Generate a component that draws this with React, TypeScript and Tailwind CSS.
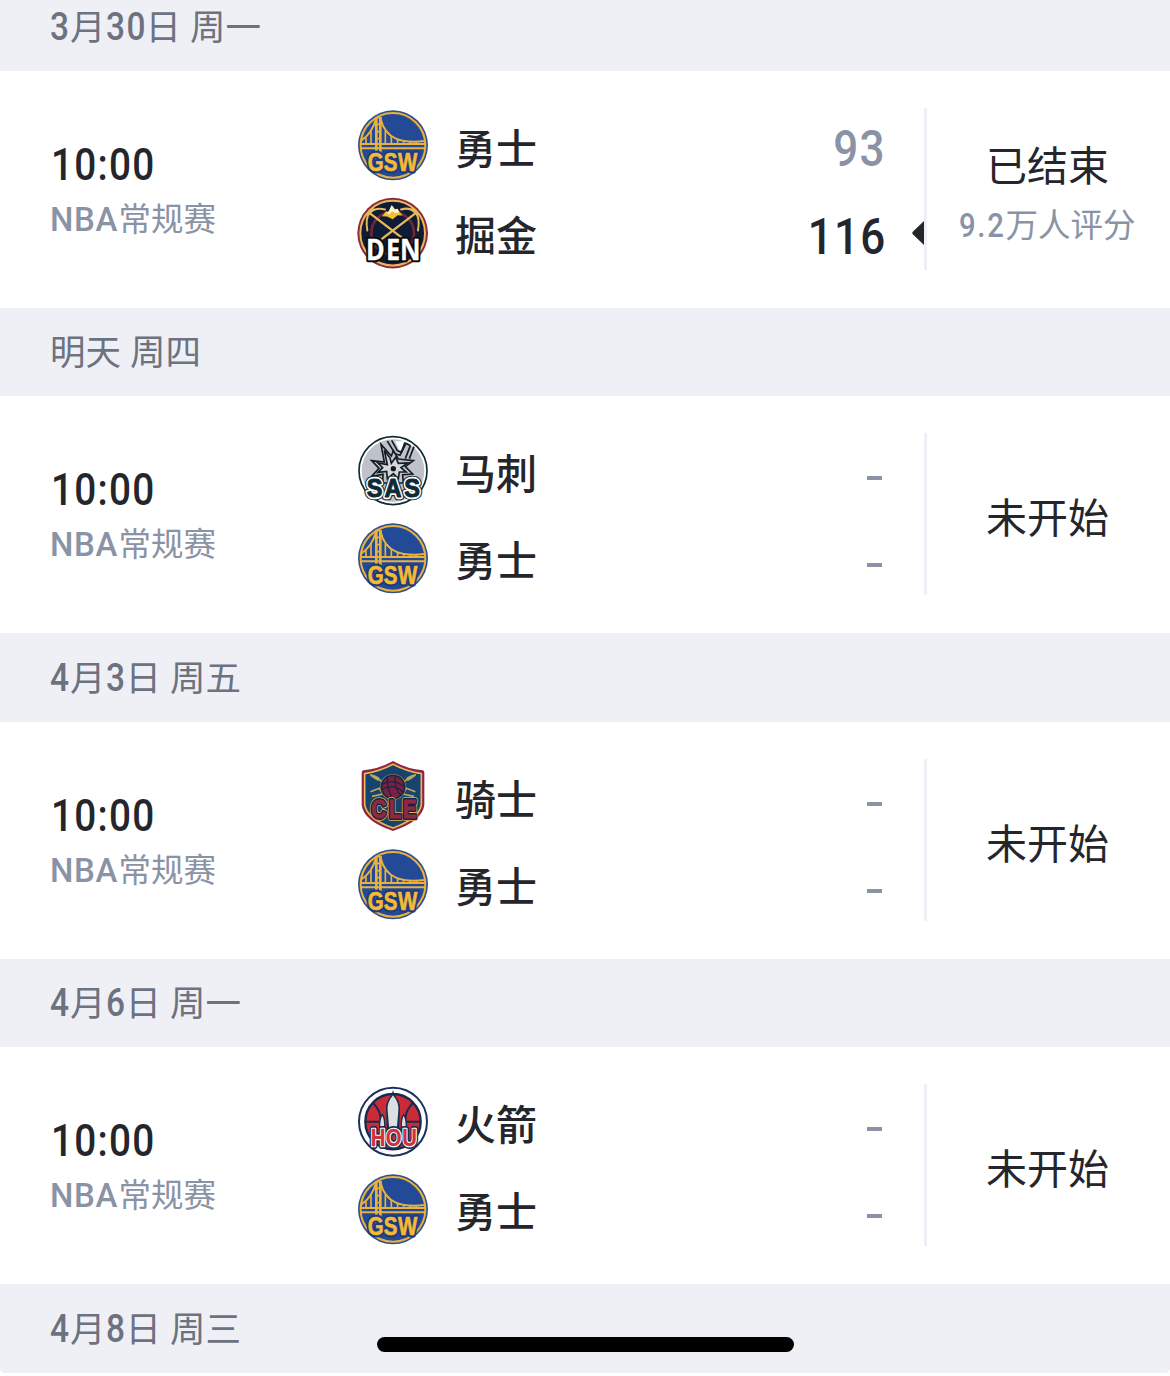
import React from "react";

const CJK = "font-['Noto_Sans_CJK_SC',sans-serif]";
const NUM = "font-['Roboto','Noto_Sans_CJK_SC',sans-serif] font-medium inline-block";
const ARIAL = "Liberation Sans, sans-serif";

type Team = "gsw" | "den" | "sas" | "cle" | "hou";
type Layer = { fill: string; stroke: string; sw: number };

const svgProps = { width: 70, height: 70, className: "block shrink-0 overflow-visible" };

function Letters({ chars, xs, y, size, sx, font, layers }: { chars: string; xs: number[]; y: number; size: number; sx: number; font: string; layers: Layer[] }) {
  return (
    <g fontFamily={font} fontWeight="700" fontSize={size} textAnchor="middle" strokeLinejoin="round">
      {layers.map((l, k) =>
        chars.split("").map((c, i) => (
          <text key={`${k}-${i}`} transform={`translate(${xs[i]} ${y}) scale(${sx} 1)`} fill={l.fill} stroke={l.stroke} strokeWidth={l.sw}>{c}</text>
        ))
      )}
    </g>
  );
}

function Gsw() {
  return (
    <svg {...svgProps} viewBox="24 29 210 210">
      <circle cx="129" cy="135" r="105" fill="#31508c" />
      <circle cx="129" cy="135" r="97" fill="#234a97" stroke="#eab13c" strokeWidth="6" />
      <g fill="none" stroke="#eab13c">
        <path d="M34 120Q66 100 78 56 M92 56C106 117 156 130 224 122" strokeWidth="6" />
        <path d="M32 131H226 M34 144H224" strokeWidth="6" />
        <path d="M79 50V182 M91 50V165" strokeWidth="8" />
        <path d="M76 52H95 M80 72H91 M80 94H91 M80 115H91" strokeWidth="5" />
        <path d="M48 112V131 M63 93V131 M106 91V131 M124 107V131 M143 116V131 M161 121V131 M180 123V131 M199 123V131" strokeWidth="5" />
      </g>
      <Letters chars="GSW" xs={[77, 122, 173]} y={212} size={75} sx={0.82} font={ARIAL} layers={[
        { fill: "none", stroke: "#1c3c82", sw: 15 },
        { fill: "#f5b933", stroke: "#f5b933", sw: 2 },
      ]} />
    </svg>
  );
}

function Den() {
  return (
    <svg {...svgProps} viewBox="24 22.5 210 210">
      <circle cx="128" cy="128" r="106" fill="#8b2b3c" />
      <circle cx="128" cy="128" r="97" fill="#0f1c38" stroke="#e8b957" strokeWidth="6" />
      <circle cx="128" cy="128" r="64" fill="none" stroke="#6f2637" strokeWidth="8" />
      <g fill="none" stroke="#e8b957" strokeLinecap="round">
        <path d="M62 70L172 154 M194 70L84 154" strokeWidth="7" />
        <path d="M52 120C47 91 52 74 60 66 C70 56 84 51 105 57 M204 120C209 91 204 74 196 66 C186 56 172 51 153 57" strokeWidth="6" />
        <path d="M53 71L69 57 M203 71L187 57" strokeWidth="8" />
      </g>
      <path d="M96 77L108 62L115 65L125 44L135 57L141 55L158 75L143 74L128 86L111 78Z" fill="#f5c02d" />
      <path d="M109 63L115 65L125 44L135 57L143 55L148 65L137 68L126 62L116 73Z" fill="#fff4cf" />
      <Letters chars="DEN" xs={[76, 129, 181]} y={208} size={84} sx={0.9} font="Open Sans, sans-serif" layers={[
        { fill: "none", stroke: "#0b0b0d", sw: 14 },
        { fill: "#fff", stroke: "#fff", sw: 1 },
      ]} />
    </svg>
  );
}

function Sas() {
  return (
    <svg {...svgProps} viewBox="24 21 210 210">
      <circle cx="129" cy="128" r="102" fill="#fff" stroke="#102a35" strokeWidth="5" />
      <circle cx="129" cy="128" r="94" fill="#bfc2ca" />
      <path d="M135 40H166L158 64L148 66Z" fill="#fff" />
      <g stroke="#151d23" strokeWidth="5" fill="#bfc2ca">
        <path d="M112 39L135 77L150 82L168 46 M181 53L166 92 M192 56L178 92 M168 46L181 53" fill="none" />
        <path d="M125 37L142 68L154 73L165 43" fill="none" />
        <path d="M93 49L124 84L130 68L145 93L190 98L166 116L188 138L158 140L160 165H98L99 139L65 145L87 121L65 98L103 102Z" />
        <path d="M103 67L120 90L124 106L137 88L145 106L173 105L153 119L168 132L148 132L145 152L130 137L112 152L110 130L84 133L98 119L84 105L112 110Z" fill="#d5d8dd" />
      </g>
      <circle cx="130" cy="122" r="8" fill="#14191e" />
      <Letters chars="SAS" xs={[74, 129, 186]} y={206} size={76} sx={0.93} font={ARIAL} layers={[
        { fill: "none", stroke: "#102a35", sw: 20 },
        { fill: "none", stroke: "#fff", sw: 13 },
        { fill: "#102a35", stroke: "#102a35", sw: 3 },
      ]} />
    </svg>
  );
}

function Cle() {
  return (
    <svg {...svgProps} viewBox="24 27 210 210">
      <path d="M129 27Q171 51 218 55Q223 56 223 62V160Q216 208 129 237Q42 208 35 160V62Q35 56 40 55Q87 51 129 27Z" fill="#8e2440" />
      <path d="M129 37Q171 59 214 65V158Q207 201 129 228Q51 201 44 158V65Q87 59 129 37Z" fill="#17446e" stroke="#eab757" strokeWidth="5" />
      <g fill="none" stroke="#bfa75b" strokeWidth="5">
        <path d="M61 69L106 94 M197 69L152 94" />
        <path d="M61 119L88 109L99 126L66 133M196 119L169 109L158 126L192 133" />
      </g>
      <path d="M59 67Q74 67 90 79L83 86Q68 80 59 67Z M199 67Q184 67 168 79L175 86Q190 80 199 67Z" fill="#bfa75b" />
      <circle cx="129" cy="105" r="39" fill="#b59349" />
      <circle cx="129" cy="105" r="35" fill="#79213f" stroke="#112849" strokeWidth="5" />
      <path d="M96 97Q130 78 162 104 M94 113Q130 91 160 121 M113 74Q108 105 127 140 M135 71Q132 109 153 132" fill="none" stroke="#18264a" strokeWidth="4" />
      <Letters chars="CLE" xs={[86, 135, 179]} y={198} size={80} sx={0.78} font={ARIAL} layers={[
        { fill: "none", stroke: "#ddb24f", sw: 17 },
        { fill: "none", stroke: "#172341", sw: 12 },
        { fill: "#922743", stroke: "#922743", sw: 3 },
      ]} />
    </svg>
  );
}

function Hou() {
  return (
    <svg {...svgProps} viewBox="24 24 210 210">
      <circle cx="129" cy="131" r="102" fill="#fff" stroke="#1b315b" strokeWidth="6" />
      <circle cx="129" cy="131" r="83" fill="#c92c37" stroke="#172b50" strokeWidth="7" />
      <path d="M49 131H96 M164 131H210 M70 75Q92 99 92 125 M188 75Q166 99 166 125" fill="none" stroke="#172b50" strokeWidth="6" />
      <path d="M129 36L133 50Q152 72 150 94L147 160H111L108 94Q106 72 125 50Z" fill="#172b50" />
      <path d="M129 52Q148 74 145 99L140 156H118L113 99Q110 74 129 52Z" fill="#dcdfe2" />
      <path d="M97 110Q106 121 104 154H89Q87 122 97 110Z M161 110Q170 121 169 154H154Q152 122 161 110Z" fill="#dcdfe2" stroke="#172b50" strokeWidth="4" />
      <Letters chars="HOU" xs={[84, 131, 179]} y={205} size={74} sx={0.82} font={ARIAL} layers={[
        { fill: "none", stroke: "#172b50", sw: 18 },
        { fill: "none", stroke: "#fff", sw: 8 },
        { fill: "#cf303c", stroke: "#cf303c", sw: 1 },
      ]} />
    </svg>
  );
}

const TEAMS: Record<Team, { name: string; Logo: () => React.JSX.Element }> = {
  gsw: { name: "勇士", Logo: Gsw },
  den: { name: "掘金", Logo: Den },
  sas: { name: "马刺", Logo: Sas },
  cle: { name: "骑士", Logo: Cle },
  hou: { name: "火箭", Logo: Hou },
};

function DateHeader({ text, className }: { text: string; className: string }) {
  return (
    <div className={`flex shrink-0 items-center bg-[#eff0f5] pl-[50px] text-[#6c7280] ${className}`}>
      <div className="flex h-[54px] items-start whitespace-pre leading-[54px]">
        {text.split(/([0-9]+| )/).filter(Boolean).map((part, i) =>
          part === " " ? (
            <span key={i} className="w-[9px]" />
          ) : /[0-9]/.test(part) ? (
            <span key={i} className={`flex ${part.length > 1 ? "w-[40px]" : "w-[20px]"}`}>
              <span className={`${NUM} origin-left scale-x-[0.88] text-[38px] tracking-[1.8px]`}>{part}</span>
            </span>
          ) : (
            <span key={i} className={`${CJK} -translate-y-[2.5px] text-[35.5px]`}>{part}</span>
          )
        )}
      </div>
    </div>
  );
}

function TeamRow({ team, score, win }: { team: Team; score?: string; win?: boolean }) {
  const { name, Logo } = TEAMS[team];
  return (
    <div className="flex h-[70px] items-center">
      <Logo />
      <span className={`${CJK} ml-[27px] mt-px text-[41px] font-medium leading-[60px] text-[#24262c]`}>{name}</span>
      {score ? (
        <span className={`${NUM} ml-auto mr-[38px] mt-[8px] origin-right scale-x-[0.88] text-[50px] leading-[60px] tracking-[1.4px] ${win ? "text-[#24262c]" : "text-[#8a93a5]"}`}>{score}</span>
      ) : (
        <span className="ml-auto mr-[42px] mt-[15px] h-[4px] w-[15px] bg-[#8a93a5]" />
      )}
    </div>
  );
}

function Match({ home, away, scores, status, sub }: { home: Team; away: Team; scores?: [string, string]; status: string; sub?: boolean }) {
  return (
    <div className="flex h-[237px] shrink-0 bg-white">
      <div className="w-[358px] pl-[50px] pt-[64px]">
        <div className={`${NUM} ml-px origin-left scale-x-[0.88] text-[44px] leading-[60px] tracking-[1.4px] text-[#24262c]`}>10:00</div>
        <div className="-mt-[3px] flex items-baseline leading-[50px] text-[#8a93a5]">
          <span className="w-[68.5px]">
            <span className={`${NUM} origin-left scale-x-[0.97] text-[34px] tracking-[0.7px]`}>NBA</span>
          </span>
          <span className={`${CJK} text-[32.5px]`}>常规赛</span>
        </div>
      </div>
      <div className="relative flex w-[566px] flex-col gap-[17.5px] pt-[39px]">
        <TeamRow team={home} score={scores?.[0]} />
        <TeamRow team={away} score={scores?.[1]} win />
        {scores && (
          <svg className="absolute right-0 top-[150px]" width="12" height="24" viewBox="0 0 12 24">
            <path d="M12 0V24L1 13.5Q-.5 12 1 10.5Z" fill="#24262c" />
          </svg>
        )}
      </div>
      <div className="mt-[37px] h-[162px] w-[3px] bg-[#eff0f5]" />
      <div className={`flex w-[241px] flex-col items-center ${sub ? "pt-[62px]" : "pt-[89px]"}`}>
        <div className={`${CJK} text-[41px] leading-[60px] text-[#24262c]`}>{status}</div>
        {sub && (
          <div className="flex items-baseline leading-[60px] text-[#8a93a5]">
            <span className="w-[46px]">
              <span className={`${NUM} origin-left scale-x-[0.86] text-[34px] tracking-[2px]`}>9.2</span>
            </span>
            <span className={`${CJK} text-[32.5px]`}>万人评分</span>
          </div>
        )}
      </div>
    </div>
  );
}

export default function App() {
  return (
    <div className="relative flex h-[1376px] w-[1170px] flex-col overflow-hidden bg-white">
      <DateHeader text="3月30日 周一" className="h-[71px] pb-[17px]" />
      <Match home="gsw" away="den" scores={["93", "116"]} status="已结束" sub />
      <DateHeader text="明天 周四" className="h-[88px]" />
      <Match home="sas" away="gsw" status="未开始" />
      <DateHeader text="4月3日 周五" className="h-[89px]" />
      <Match home="cle" away="gsw" status="未开始" />
      <DateHeader text="4月6日 周一" className="h-[88px]" />
      <Match home="hou" away="gsw" status="未开始" />
      <DateHeader text="4月8日 周三" className="h-[89px] rounded-b-[5px]" />
      <div className="absolute bottom-[24px] left-[377px] h-[15px] w-[417px] rounded-full bg-black" />
    </div>
  );
}
